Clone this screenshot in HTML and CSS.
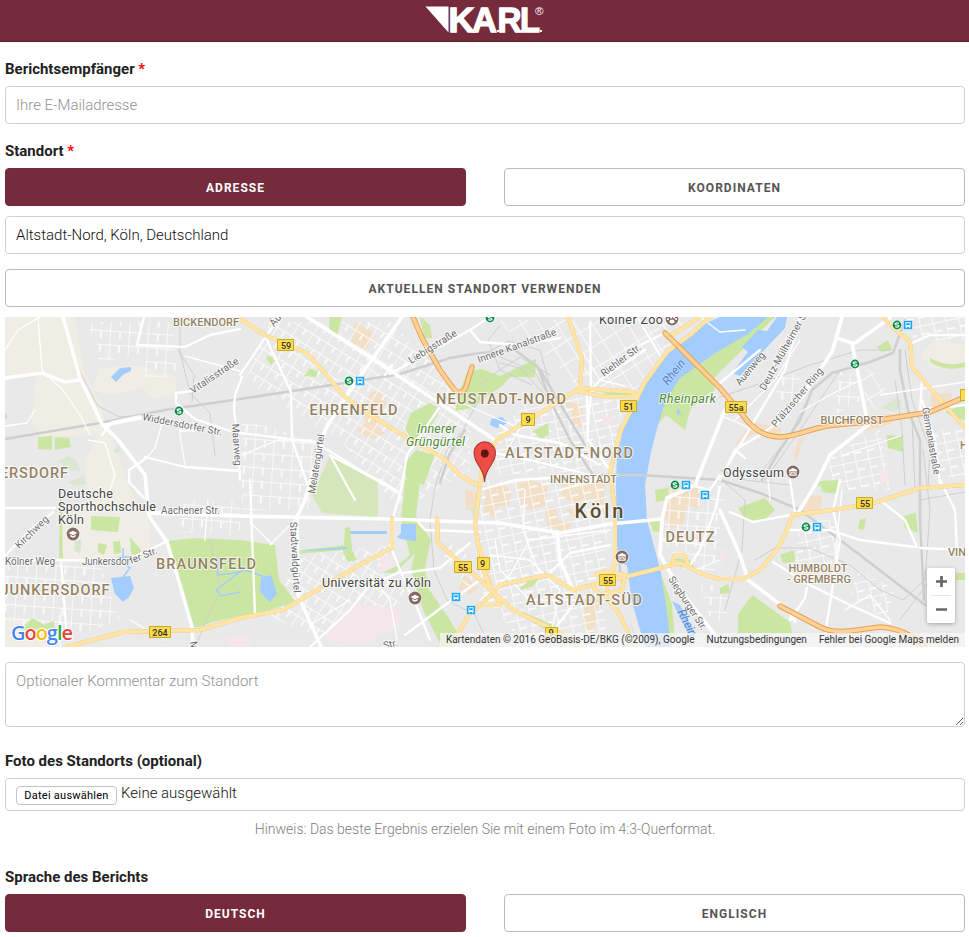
FILE: index.html
```html
<!DOCTYPE html>
<html lang="de">
<head>
<meta charset="utf-8">
<title>K.A.R.L. Bericht</title>
<link rel="stylesheet" href="styles.css">
</head>
<body>
<header class="topbar">
  <svg class="logo" viewBox="425 0 120 40" width="120" height="40" role="img" aria-label="K.A.R.L.">
    <path d="M425.500 6.500H448.500V32.500Z" fill="#fff"/>
    <g class="logo-text"><text x="448.500" y="31.500" textLength="26" lengthAdjust="spacingAndGlyphs">K</text><text x="472" y="31.500" textLength="25" lengthAdjust="spacingAndGlyphs">A</text><text x="497.500" y="31.500" textLength="24" lengthAdjust="spacingAndGlyphs">R</text><text x="520" y="31.500" textLength="20" lengthAdjust="spacingAndGlyphs">L</text></g>
    <path d="M473 30h2v2h-2zM497 30h2v2h-2zM520 30h2v2h-2zM540 30h2v2h-2z" fill="#fff"/>
    <text class="logo-reg" x="535" y="14.500">®</text>
  </svg>
</header>
<main class="form">
  <label class="label" for="mail">Berichtsempfänger <span class="required">*</span></label>
  <input class="field" id="mail" type="email" placeholder="Ihre E-Mailadresse">

  <div class="label label-location">Standort <span class="required">*</span></div>
  <div class="pair">
    <button class="button primary">Adresse</button>
    <button class="button">Koordinaten</button>
  </div>
  <input class="field address" type="text" value="Altstadt-Nord, Köln, Deutschland">
  <button class="button locate">Aktuellen Standort verwenden</button>

  <div class="map">
    <svg class="map-canvas" viewBox="5 317 960 330" width="960" height="330">
      <defs>
        <pattern id="gridA" width="17" height="13" patternUnits="userSpaceOnUse" patternTransform="rotate(32)"><path d="M0 0H17M0 0V13M9 0V7"/></pattern>
        <pattern id="gridB" width="13" height="17" patternUnits="userSpaceOnUse" patternTransform="rotate(-12)"><path d="M0 0H13M0 0V17M0 9H8"/></pattern>
        <pattern id="gridC" width="19" height="14" patternUnits="userSpaceOnUse" patternTransform="rotate(4)"><path d="M0 0H19M0 0V14M10 0V8"/></pattern>
        <pattern id="gridD" width="15" height="19" patternUnits="userSpaceOnUse" patternTransform="rotate(-32)"><path d="M0 0H15M0 0V19"/></pattern>
        <g id="sbahn"><circle r="5" fill="#fff"/><circle r="4.400" fill="#0a8a4b"/><path d="M1.800-1.600Q0-2.800-1.400-1.700T0 0T1.400 1.700Q0 2.800-1.800 1.600" fill="none" stroke="#fff" stroke-width="1.200"/></g>
        <g id="station"><rect x="-4.500" y="-4.500" width="9" height="9" rx=".8" fill="#1ba5f4" stroke="#fff" stroke-width=".5"/><path d="M-2.500-2.800H2.500V2H-2.500ZM-2.300 2H-1.300V3.200H-2.300ZM1.300 2H2.300V3.200H1.300Z" fill="#fff"/><path d="M-1.700-1.800H1.700V.2H-1.700Z" fill="#1ba5f4"/></g>
        <g id="poi"><circle r="7" fill="#fff"/><circle r="6.400" fill="#866b63"/></g>
        <g id="school"><use href="#poi"/><path d="M-4.500-1L0-3.300 4.500-1 0 1.300ZM-2.700.8V2.400L0 3.800 2.700 2.400V.8L0 2.200Z" fill="#fff"/></g>
        <g id="museum"><use href="#poi"/><path d="M-4-2 0-4 4-2V-1H-4ZM-3.600 2.500H3.600V3.800H-3.600Z" fill="#fff"/><path d="M-3-1V3M3-1V3M-1.200 2V0H1.200V2" fill="none" stroke="#fff" stroke-width="1.100"/></g>
      </defs>
      <rect x="5" y="317" width="960" height="330" fill="#e9e9e9"/>

      <g class="sand">
        <path d="M5 317H75L84 370 98 400 105 420 135 500 125 512 88 512 85 460 100 435 40 437 31 420 36 376 5 378Z"/>
        <path d="M100 368 138 365 177 378 175 396 150 398 143 387 112 395 92 390Z"/>
        <path d="M5 620 35 618 60 635 55 647H5ZM935 340 965 345V368L935 368 920 356Z"/>
        <path d="M62 512 145 510 152 535 150 550 92 560 62 558Z" opacity=".8"/>
      </g>
      <g class="commerce">
        <path d="M355 322 374 333 366 350 350 345ZM372 391 386 395 385 405 376 425 385 433 373 439 357 431 366 422 362 412Z"/>
        <path d="M560 400 583 405 582 428 572 425 572 412ZM485 487 503 483 511 492 509 506 497 506 494 517 484 514ZM517 484 532 480 548 487 545 506 528 510 520 501ZM545 509 556 506 558 520 573 523 565 532 547 526ZM561 485 580 482 605 480 604 505 589 498 575 504 562 497ZM565 510 578 508 575 517Z"/>
        <path d="M668 487 695 482 702 495 698 509 687 505 684 524 672 529 662 512ZM805 495 822 496 820 512 800 514ZM867 415 890 414 892 424 862 432ZM930 395 952 393 950 408 932 410Z"/>
        <path d="M585 595 600 600 593 635 583 625ZM465 490 480 492 478 512 466 510ZM465 575 478 588 470 595 458 588ZM735 445 752 422 780 428 782 434 758 432ZM798 440 804 436 797 460 793 460Z"/>
      </g>

      <g class="grids">
        <path fill="url(#gridC)" d="M88 322 143 322 142 354 100 362ZM146 322 173 322 176 376 145 377Z"/>
        <path fill="url(#gridA)" d="M270 322 390 322 470 400 470 470 400 510 340 440 290 410 245 380Z"/>
        <path fill="url(#gridC)" d="M242 420 315 440 310 510 242 510ZM5 565 100 565 120 620 65 640 5 620ZM185 500 240 500 240 535 175 532Z"/>
        <path fill="url(#gridA)" d="M305 555 385 545 405 590 375 635 310 635 260 612ZM445 540 475 560 470 590 445 560Z"/>
        <path fill="url(#gridB)" d="M535 395 625 400 608 470 500 475 480 450ZM480 480 608 478 605 640 520 640 480 590Z"/>
        <path fill="url(#gridD)" d="M490 320 690 320 635 390 585 395 565 375 540 350ZM860 365 890 380 875 410 860 400Z"/>
        <path fill="url(#gridC)" d="M670 490 725 485 715 570 685 570 662 540ZM700 585 730 585 725 625 708 615Z"/>
        <path fill="url(#gridB)" d="M800 520 835 520 838 570 795 570ZM830 455 880 430 890 490 825 490ZM860 570 895 590 885 620 850 595ZM900 317 965 317 965 340 915 340ZM930 430 965 430 965 480 940 475Z"/>
        <path fill="url(#gridC)" d="M780 375 800 373 800 405 773 404ZM838 370 855 375 860 400 835 415Z"/>
      </g>

      <g class="hospital">
        <path d="M351 603 402 610 400 625 358 645 325 638ZM380 555 392 557 395 573 380 571ZM605 415 615 418 612 425 603 424ZM225 636H250V647H230ZM720 550 728 548 725 560 720 567ZM880 470H888V483H880Z"/>
      </g>
      <g class="green">
        <path d="M38 437 52 436 52 450 38 449ZM55 437 69 438 71 447 55 450ZM91 516 120 517 118 532 91 530Z"/>
        <path d="M166 541 195 538 240 540 275 545 279 580 296 602 270 610 240 616 212 622 200 627 190 627Z"/>
        <path d="M332 452 378 481 378 517 322 513 312 495Z" fill="#d5e6ba"/>
        <path d="M58 461 68 456 76 460 80 471 70 470ZM68 482 84 476 86 484 74 486ZM113 450 119 446 121 450 116 454ZM425 405 440 407 430 425 415 430ZM75 540 82 540 80 554 74 550ZM470 507 478 510 474 520ZM880 408 900 396 901 405 895 412Z" fill="#d9e7d2"/>
        <path d="M269 355 275 361 271 365 266 358ZM310 368 318 372 316 377 304 376ZM420 317 430 325 432 338 424 338ZM330 317 342 317 337 337 329 328Z"/>
        <path d="M467 372 482 369 500 376 536 359 535 377 510 377 502 386 484 398 473 408 455 411 458 396Z"/>
        <path d="M411 413 430 403 440 410 429 430 412 440 405 428ZM416 450 435 455 424 485 407 480 403 465ZM405 480 420 480 416 516 431 540 425 567 428 588 448 617 457 632 455 647 442 647 423 610 411 570 415 553 395 573 382 573 395 567 410 555 401 520Z"/>
        <path d="M345 528 350 527 352 550 357 560 348 562 343 553ZM296 551 345 545 345 550 297 554ZM533 431 548 423 549 434 541 440ZM625 390 634 393 632 396 605 395 603 391Z"/>
        <path d="M720 350 750 330 768 317 775 317 740 352 712 380 715 390 702 398 690 410 685 430 666 415 657 425 650 452 645 480 642 480 656 410 678 377Z"/>
        <path d="M738 508 765 498 775 510 762 522 745 519ZM780 555 794 550 795 562 783 563ZM738 614 752 595 790 622 792 633 738 633ZM720 588 728 584 730 593 720 594ZM650 570 660 572 672 604 675 640 666 640Z"/>
        <path d="M877 347 888 340 892 350 882 352ZM886 435 902 436 903 452 888 448ZM903 516 916 513 918 533 905 528ZM820 481 838 480 837 494 822 492ZM860 520 866 518 864 530 858 529ZM945 412 965 404V420L955 418ZM957 573H965V580H955ZM930 358Q948 368 965 362V367Q944 372 930 362Z"/>
        <path d="M655 490 668 488 668 500 656 502ZM650 522 660 520 661 532 653 531ZM520 588 535 576 538 580 532 587 520 590ZM521 611 560 628 550 632 523 617ZM675 558 690 560 695 568 680 567ZM60 488 62 510 63 558 59 559ZM130 537 141 550 138 557 131 553Z"/>
        <path d="M98 543 107 545 104 555 98 552ZM113 542 120 541 121 553 114 554ZM5 414 7 414 7 418 5 419ZM20 630 32 618 45 625 54 620 54 630 40 632ZM815 480 822 482 819 487Z"/>
      </g>
      <g class="water">
        <path d="M768 317 748 334 720 350 680 378 666 400 658 425 651 452 645 485 647 520 655 550 661 573 667 613 671 647H636L627 603 620 577 617 547 616 482 617 455 627 415 635 397 647 382 665 354 695 328 720 317Z"/>
        <path d="M787 317 785 328 740 376 732 373 748 352 742 347 758 330 767 331 777 317Z"/>
        <path d="M111 377 120 368 131 367 131 371 124 374 116 382ZM111 578 130 576 134 588 129 597 123 602 115 594ZM491 419 502 417 508 423 497 428 490 425ZM401 524 416 524 416 541 401 539 397 537 401 533Z"/>
        <path d="M350 531 387 531 387 534 350 534ZM305 550 347 547 347 549 305 551ZM261 578 271 575 277 594 270 602 260 592ZM678 408 682 415 676 413ZM672 601 680 605 695 633 688 634Z"/>
      </g>
      <path d="M620 563 627 565 632 602 645 647H637L626 603Z" fill="#e9e9e9"/>
      <path class="water-line" d="M218 558 218 575 235 573 245 570 265 577M240 572 216 590 221 596 240 592M123 548 123 563 130 568 123 577M118 557H130"/>

      <g class="rails">
        <path class="rail-wide" d="M5 439 100 423 165 410 240 399 345 383 400 374 450 358 480 353 515 350 538 367 550 400 570 440 593 475 640 475 720 480 760 493 800 510 860 555 925 605"/>
        <path d="M67 332 80 372 98 406 120 417 142 415M180 317 180 352 190 393 210 413 215 455M178 350 194 375 192 402M480 385 500 370 520 357 550 375M500 326 488 340 500 370 532 385M492 350 508 341 540 350 552 393M496 355 535 372 545 390M500 363 520 368 546 396M480 397 463 430 447 450 435 487 430 520 434 570 447 600 475 615 490 647"/>
        <path class="rail-wide" d="M905 320 893 353 870 362 832 373 812 390 800 420 780 450 762 480"/>
        <path class="rail-wide" d="M900 350 900 370 908 410 920 440 920 520 924 600"/>
        <path class="rail-wide" d="M440 483 449 455 465 430M540 370 565 412 585 445"/>
        <path d="M720 397 765 382 810 365 860 350 890 350M720 470 745 480 790 485M765 480 800 430 840 370M755 480 790 435 815 385M722 480 745 500 742 550 725 610M755 560 775 548 810 548 850 565 880 590 903 600 925 580 930 510 923 450M920 500 965 492M210 540 220 590 195 647M895 380 902 430 905 485M905 350 912 400 930 450 928 490M912 420 915 490M900 620 930 580"/>
      </g>

      <g class="minor">
        <path d="M5 350 18 330 40 317M38 317 42 370 63 390 80 415 90 435M5 426 27 423 35 410M88 440 105 443 115 475 110 490M163 420 155 448 146 458M180 420 180 435 185 465"/>
        <path d="M185 356 240 371M242 455 278 440 312 440M60 615 60 647M208 500 205 540M445 395 500 420 520 428 510 445M575 340 600 380 625 386M720 415 765 435M800 412 830 395 860 380M880 395 965 382M843 455 900 436M660 540 705 545M845 610 870 595 890 620"/>
        <path d="M480 600 510 575 530 540 610 530M495 540 500 570 530 600 580 600M490 555 530 560 560 590 552 630M525 490 523 530 540 575M700 317 720 332 745 330M768 480 770 500M800 340 775 380 735 420M842 490 838 530 835 560M695 570 720 560M250 522 272 544M270 545 295 520M350 600 310 625M370 575 390 600 397 640M130 620 165 640"/>
      </g>

      <g class="streets">
        <path class="wide" d="M63 317 80 378 102 424 118 440 145 475 149 516 167 542 180 585 192 627 193 647M5 378 42 373 65 382 80 380M148 513 240 516 390 519 440 521 500 523 560 533 610 524 662 519M105 425 140 418"/>
        <path d="M144 317 137 345 185 347 210 335 240 329M102 435 112 422 140 416M242 377 235 395 234 410 238 440 240 480M145 457 185 467 240 471M145 459 129 470 129 482 144 498M192 391 176 393 176 403 195 419 230 431M149 512 240 515M5 508 55 508M53 512 30 530 5 556M5 560 60 560 125 561 168 541M61 560 67 640M180 431 195 430"/>
        <path d="M240 375 275 323M265 336 291 392 292 440 307 483M240 433 315 442 355 467 400 493M250 480 255 615"/>
        <path class="wide" d="M402 317 345 398 325 430 305 500 297 517 298 595 321 647"/>
        <path class="wide" d="M307 317 382 365 450 410 495 440"/>
        <path d="M390 374 470 330 490 317M470 330 480 342 520 345 560 338M385 375 392 365M439 408 407 455 401 490 392 521M390 545 402 575 418 610 430 640M403 573 440 568 470 543M380 480 395 490M355 500 330 455 378 481M418 522 425 530 480 532M310 647 350 610 370 585 400 572M405 635 445 605 480 580M500 425 515 435 560 443 600 465"/>
        <path d="M590 323 591 393 587 435M645 350 600 380 587 395 588 440 610 470M665 333 630 350M637 317 660 355M480 450 530 460 590 475M480 490 515 480 600 475"/>
        <path class="wide" d="M557 532 560 560 573 590"/>
        <path d="M548 575 570 553 610 545M573 605 550 635M610 475 560 490"/>
        <path class="wide" d="M662 519 660 555 680 590 715 635M662 519 667 498 695 485 725 410"/>
        <path d="M720 487 715 510 700 550 690 565M690 485 710 490 720 475M842 317 835 345 820 370 785 418 760 435 735 450 720 480M720 383 760 350M800 317 785 370 725 470"/>
        <path class="wide" d="M842 317 832 352 800 400M837 338 852 343 868 425M890 318 855 343M868 425 830 455 817 482 798 513"/>
        <path class="wide" d="M720 510 740 555 748 580 790 612 795 621"/>
        <path d="M730 512 753 522 790 515 795 513 790 480M773 562 810 585 850 605 890 623M825 635 840 540 833 510 840 480M788 530 830 530 860 540 915 547M880 500 905 520 917 547M940 480 955 510 957 550M920 548 965 550M965 335 930 335 912 343M922 380 920 410 965 405M922 400 935 440 940 485M790 620 805 598 807 588M735 450 745 458"/>
      </g>

      <g class="yellow">
        <path d="M240 319 265 335 307 353 322 370 345 397 373 417 403 435 443 458 460 475 473 483 480 485 475 525 480 555 490 583"/>
        <path d="M568 317 582 358 580 388 537 415 497 440 483 462 480 485M580 388 633 392 637 396M577 391 605 397 636 397M710 317 690 335 667 352 645 382 635 402 620 432 610 472 615 510 615 563 605 595 620 615 635 647"/>
        <path d="M883 317 892 327 910 342 912 367 942 402 965 428M965 485 920 488 877 502 840 509 792 515 787 530 778 548 760 570 743 579 720 579 705 575 680 563 613 580 573 590 548 575 500 585 483 603M700 317 670 336M483 603 470 613 450 647"/>
        <path d="M67 647 123 632 200 630 240 618 283 610 317 590 363 563 392 548 392 518M437 518 438 543 480 580 513 610 560 633 580 647M480 547 485 575 500 605 483 605M595 575 607 571 625 575 622 590 600 595 592 585M672 563 675 555 684 555 688 564"/>
      </g>
      <g class="orange-edge"><path d="M413 317 422 338 440 370 453 388Q461 397 466 387L472 367M665 333 720 388 742 414Q757 437 781 437C800 436 812 427 835 425L867 422 930 412 965 397M780 606 820 627Q832 633 850 631L880 627Q905 628 925 647"/></g>
      <g class="orange"><path d="M413 317 422 338 440 370 453 388Q461 397 466 387L472 367M665 333 720 388 742 414Q757 437 781 437C800 436 812 427 835 425L867 422 930 412 965 397M780 606 820 627Q832 633 850 631L880 627Q905 628 925 647"/></g>

      <g class="shields">
        <path d="M277.500 339.500h16v11h-16zM521.500 413.500h13v12h-13zM620.500 400.500h16v11h-16zM725.500 401.500h21v11h-21zM856.500 497.500h16v11h-16zM454.500 561.500h17v11h-17zM477.500 557.500h12v12h-12zM599.500 574.500h16v11h-16zM149.500 626.500h21v11h-21zM545.500 627.500h12v11h-12zM960.500 389.500h12v11h-12z"/>
        <text x="286" y="348.500">59</text><text x="528" y="423">9</text><text x="628.500" y="409.500">51</text><text x="736" y="410.500">55a</text><text x="865" y="506.500">55</text><text x="463" y="570.500">55</text><text x="482.500" y="567">9</text><text x="608" y="583.500">55</text><text x="160" y="635.500">264</text><text x="551" y="636">9</text>
      </g>

      <g class="roads">
        <text transform="translate(193 394) rotate(-34)" textLength="56">Vitalisstraße</text>
        <text transform="translate(142 420) rotate(11)" textLength="81">Widdersdorfer Str.</text>
        <text transform="translate(232 424) rotate(86)" textLength="42">Maarweg</text>
        <text transform="translate(315 494) rotate(-81)" textLength="60">Melatengürtel</text>
        <text transform="translate(274 327) rotate(-50)">Äu</text>
        <text transform="translate(411 364) rotate(-32)" textLength="55">Liebigstraße</text>
        <text transform="translate(479 363) rotate(-20)" textLength="83">Innere Kanalstraße</text>
        <text transform="translate(604 377) rotate(-37)" textLength="47">Riehler Str.</text>
        <text transform="translate(740 386) rotate(-50)" textLength="40">Auenweg</text>
        <text transform="translate(765 391) rotate(-61)" textLength="86">Deutz-Mülheimer S</text>
        <text transform="translate(776 428) rotate(-50)" textLength="74">Pfälzischer Ring</text>
        <text transform="translate(922 408) rotate(80)" textLength="68">Germaniastraße</text>
        <text x="161" y="514" textLength="59">Aachener Str.</text>
        <text x="5" y="565" textLength="50">Kölner Weg</text>
        <text transform="translate(19 549) rotate(-44)" textLength="42">Kirchweg</text>
        <text x="82" y="565" textLength="48">Junkersdor</text><text transform="translate(131 564) rotate(-22)">fer Str.</text>
        <text transform="translate(290 522) rotate(87)" textLength="71">Stadtwaldgürtel</text>
        <text transform="translate(668 579) rotate(57)" textLength="62">Siegburger Str.</text>
        <text transform="translate(384 649) rotate(-12)">Str.</text><text transform="translate(190 642) rotate(80)">M</text>
      </g>
      <g class="river">
        <text transform="translate(668 386) rotate(-52)">Rhein</text><text transform="translate(677 612) rotate(62)">Rhein</text>
      </g>
      <g class="parks"><text x="417" y="433" textLength="39">Innerer</text><text x="406" y="446" textLength="59">Grüngürtel</text><text x="659" y="402.500" textLength="57">Rheinpark</text></g>
      <g class="district">
        <text x="353.500" y="415" textLength="88">EHRENFELD</text><text x="501" y="404" textLength="130">NEUSTADT-NORD</text><text x="569" y="458" textLength="128">ALTSTADT-NORD</text><text x="690" y="542" textLength="49">DEUTZ</text><text x="584" y="605" textLength="116">ALTSTADT-SÜD</text><text x="206" y="569" textLength="100">BRAUNSFELD</text><text x="55" y="595" textLength="109">JUNKERSDORF</text><text x="34" y="478" textLength="68">ERSDORF</text>
      </g>
      <g class="quarter">
        <text x="206" y="326" textLength="66">BICKENDORF</text><text x="583.500" y="483" textLength="67">INNENSTADT</text><text x="852" y="424" textLength="63">BUCHFORST</text><text x="818" y="572" textLength="59">HUMBOLDT</text><text x="819" y="583" textLength="64">- GREMBERG</text><text x="957" y="556">VIN</text><text x="964" y="449">H</text>
      </g>
      <text class="city" x="599" y="518" textLength="49">Köln</text>
      <g class="places">
        <text x="599" y="324" textLength="64">Kölner Zoo</text><text x="723" y="477" textLength="61">Odysseum</text><text x="322" y="587" textLength="109">Universität zu Köln</text><text x="58" y="497.500" textLength="55">Deutsche</text><text x="58" y="510.500" textLength="98">Sporthochschule</text><text x="58" y="523.500" textLength="26">Köln</text>
      </g>
      <use href="#school" x="73" y="534"/><use href="#school" x="415" y="598"/><use href="#museum" x="622" y="557"/><use href="#museum" x="793" y="472"/><use href="#poi" x="672" y="319"/>
      <g fill="#fff"><ellipse cx="672" cy="321.500" rx="2.500" ry="2"/><circle cx="668" cy="319" r="1.100"/><circle cx="676" cy="319" r="1.100"/><circle cx="671" cy="317.500" r="1"/><circle cx="674" cy="317.500" r="1"/></g>
      <use href="#sbahn" x="179" y="411"/><use href="#sbahn" x="349" y="381"/><use href="#sbahn" x="490" y="318"/><use href="#sbahn" x="675" y="485"/><use href="#sbahn" x="897" y="325"/><use href="#sbahn" x="855" y="364"/><use href="#sbahn" x="806" y="527"/>
      <use href="#station" x="360" y="381"/><use href="#station" x="686" y="485"/><use href="#station" x="705" y="495"/><use href="#station" x="908" y="325"/><use href="#station" x="817" y="527"/><use href="#station" x="456" y="597"/><use href="#station" x="471" y="610"/>
      <path d="M484.500 482C484 468 474 464 474 452.500A10.700 10.700 0 0 1 495.500 452.500C495.500 464 485.500 468 484.500 482Z" fill="#ee4c45" stroke="#8f2923" stroke-width=".9"/><circle cx="484.800" cy="453.500" r="3.900" fill="#5b1611"/>
      <text class="google" x="11" y="640" textLength="62"><tspan fill="#4285f4">G</tspan><tspan fill="#ea4335">o</tspan><tspan fill="#fbbc05">o</tspan><tspan fill="#4285f4">g</tspan><tspan fill="#34a853">l</tspan><tspan fill="#ea4335">e</tspan></text>
    </svg>
    <div class="zoom-control">
      <svg width="28" height="55" viewBox="0 0 28 55"><path d="M9 13.500H20M14.500 8V19M9 41.500H20" stroke="#666" stroke-width="2.700"/><path d="M4 27.500H24" stroke="#e6e6e6"/></svg>
    </div>
    <div class="attribution"><span>Kartendaten © 2016 GeoBasis-DE/BKG (©2009), Google</span><span>Nutzungsbedingungen</span><span>Fehler bei Google Maps melden</span></div>
  </div>

  <textarea class="field comment" placeholder="Optionaler Kommentar zum Standort"></textarea>

  <div class="label">Foto des Standorts (optional)</div>
  <div class="file"><button class="file-button">Datei auswählen</button><span class="file-name">Keine ausgewählt</span></div>
  <p class="hint">Hinweis: Das beste Ergebnis erzielen Sie mit einem Foto im 4:3-Querformat.</p>

  <div class="label">Sprache des Berichts</div>
  <div class="pair">
    <button class="button primary">Deutsch</button>
    <button class="button">Englisch</button>
  </div>
</main>
</body>
</html>
```
FILE: styles.css
```css
* { box-sizing: border-box; }
html { overflow: hidden; }
body { margin: 0; background: #fff; color: #222; font: 300 15px/24px Roboto, sans-serif; }
input, textarea, button { font: inherit; margin: 0; }

.topbar { height: 42px; background: #762b3c; border-bottom: 1px solid #5d2130; display: flex; justify-content: center; }
.logo { display: block; }
.logo-text { font: 700 35px "Liberation Sans", sans-serif; fill: #fff; stroke: #fff; stroke-width: 1.3; }
.logo-reg { font: 400 11.500px "Liberation Sans", sans-serif; fill: #fff; }

.form { padding: 15px 4px 0 5px; display: flex; flex-direction: column; }
.label { display: block; font-weight: 700; line-height: 24px; margin-bottom: 5px; }
.label-location { margin-top: 15px; }
.required { color: #f00; }

.field { display: block; width: 100%; height: 38px; border: 1px solid #d1d1d1; border-radius: 4px; padding: 6px 10px; background: #fff; color: #111; outline: none; }
.field::placeholder { color: #929292; opacity: 1; }
.pair { display: grid; grid-template-columns: 1fr 1fr; gap: 38px; }
.button { height: 38px; border: 1px solid #bbb; border-radius: 4px; background: #fff; color: #555; font-size: 12px; font-weight: 700; line-height: 36px; letter-spacing: 1.03px; text-transform: uppercase; padding: 1px 0 0; }
.button.primary { background: #762b3c; border-color: #762b3c; color: #fff; }
.address { margin-top: 10px; }
.locate { margin-top: 15px; }

.map { position: relative; width: 960px; height: 330px; margin-top: 10px; overflow: hidden; }
.map-canvas { display: block; font-family: Roboto, sans-serif; }
.sand { fill: #f0ede5; }
.commerce { fill: #f1dfc8; }
.hospital { fill: #f4e6eb; }
.green { fill: #cbe6a3; }
.water { fill: #a3ccff; }
.water-line { fill: none; stroke: #a3ccff; stroke-width: 1.500; }
pattern path { fill: none; stroke: #fff; stroke-width: 1.800; }
.grids { opacity: .8; }
.rails, .minor, .streets, .yellow, .orange, .orange-edge { fill: none; stroke-linejoin: round; stroke-linecap: round; }
.rails { stroke: #cfcfcf; stroke-width: 1; }
.rail-wide { stroke-width: 2.500; }
.minor { stroke: #fff; stroke-width: 1.300; }
.streets { stroke: #fff; stroke-width: 2.300; }
.streets .wide { stroke-width: 3.700; }
.yellow path { stroke: #ffe4a5; stroke-width: 4; filter: drop-shadow(0 0 .5px #d9b66a); }
.orange-edge { stroke: #e7a24f; stroke-width: 5.500; }
.orange { stroke: #ffd199; stroke-width: 3.500; }
.shields path { fill: #fddc4b; stroke: #cba82c; stroke-width: 1; }
.shields text { font-size: 9px; font-weight: 500; fill: #333; text-anchor: middle; }
.roads, .river, .parks, .district, .quarter, .places, .city { paint-order: stroke; stroke: #fff; stroke-width: 2px; stroke-opacity: .75; stroke-linejoin: round; }
.roads { font-size: 10px; font-weight: 400; fill: #6b6b6b; }
.river { font-size: 12px; font-style: italic; fill: #5283c4; stroke-opacity: .2; font-weight: 400; }
.parks { font-size: 12.500px; font-style: italic; fill: #4f8c35; font-weight: 400; }
.district { font-size: 14.500px; font-weight: 500; fill: #94825f; text-anchor: middle; }
.quarter { font-size: 11px; font-weight: 500; fill: #94825f; text-anchor: middle; }
.city { font-size: 20px; font-weight: 500; fill: #5c4d28; text-anchor: middle; }
.places { font-size: 12.500px; font-weight: 400; fill: #444; }
.google { font: 600 20px "Open Sans", sans-serif; paint-order: stroke; stroke: #fff; stroke-width: 2px; }
.zoom-control { position: absolute; right: 10px; bottom: 24px; width: 28px; height: 55px; background: #fff; border-radius: 2px; box-shadow: 0 1px 4px rgba(0, 0, 0, .3); }
.attribution { position: absolute; right: 0; bottom: 0; height: 14px; display: flex; background: rgba(245, 245, 245, .75); color: #333; font-size: 10px; font-weight: 400; line-height: 14px; white-space: nowrap; }
.attribution span { padding: 0 6px; }

.comment { height: 65px; margin: 15px 0 22px; padding: 6px 10px; resize: vertical; }
.file { height: 33px; border: 1px solid #d1d1d1; border-radius: 4px; padding: 6px 10px; display: flex; gap: 4px; color: #111; }
.file-button { width: 101px; height: 19px; margin-top: 1px; padding: 0; border: 1px solid #c4c4c4; border-radius: 4px; background: #fff; color: #000; font: 400 11px/17px Roboto, sans-serif; letter-spacing: .25px; }
.file-name { line-height: 16px; }
.hint { margin: 6px 0 24px; color: #808080; text-align: center; font-size: 14px; line-height: 24px; }
```
